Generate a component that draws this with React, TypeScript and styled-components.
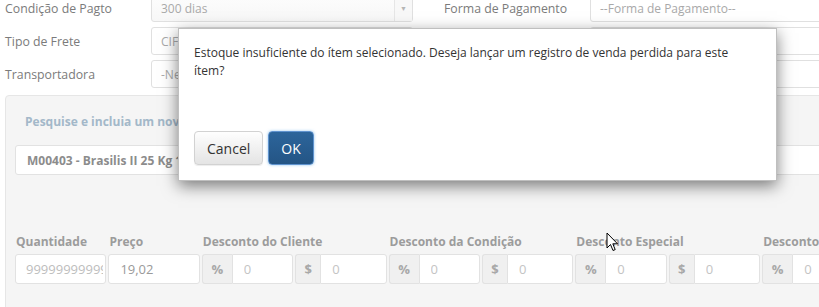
import React from "react";
import styled, { createGlobalStyle } from "styled-components";

const GlobalStyle = createGlobalStyle`
  html, body {
    margin: 0;
    background: #fff;
    font-family: "Open Sans", "Liberation Sans", sans-serif;
    overflow: hidden;
  }
`;

const Screen = styled.div`
  position: relative;
  display: flex;
  flex-direction: column;
  height: 100vh;
  overflow: hidden;
`;

const Page = styled.div`
  width: 880px;
  margin-top: -6px;
  padding-left: 5px;
`;

const TopForm = styled.div`
  display: grid;
  grid-template-columns: 146px 262px 177px 1fr;
  grid-auto-rows: 28px;
  row-gap: 5px;
  align-items: center;
`;

const FormLabel = styled.div<{ $indent?: number }>`
  padding-left: ${(p) => p.$indent ?? 0}px;
  font-size: 12.3px;
  color: #7b7b7b;
`;

const Box = styled.div`
  box-sizing: border-box;
  height: 28px;
  display: flex;
  align-items: center;
  padding-left: 9px;
  border: 1px solid #e0e0e0;
  border-radius: 3px;
  background: #fff;
  font-size: 12px;
  color: #a9a9a9;
`;

const SelectBox = styled(Box)`
  padding-right: 0;
  background: linear-gradient(#fdfdfd, #f7f7f7);
`;

const SelectText = styled.span`
  flex: 1;
`;

const SelectArrow = styled.span`
  display: flex;
  align-items: center;
  justify-content: center;
  width: 17px;
  height: 100%;
  border-left: 1px solid #e6e6e6;
  background: #f8f8f8;
  color: #b5b5b5;
  font-size: 7px;
`;

const Panel = styled.div`
  margin-top: 7px;
  height: 260px;
  padding: 17px 9px 0;
  border: 1px solid #e6e6e6;
  border-radius: 4px;
  background: #f5f5f5;
`;

const PanelTitle = styled.div`
  padding-left: 10px;
  font-size: 12px;
  line-height: 18px;
  font-weight: 700;
  color: #a3b8c9;
`;

const ProductBox = styled.div`
  box-sizing: border-box;
  height: 30px;
  margin-top: 14px;
  display: flex;
  align-items: center;
  padding-left: 11px;
  border: 1px solid #e2e2e2;
  border-radius: 3px;
  background: #fff;
  font-size: 12px;
  font-weight: 700;
  color: #8c8c8c;
`;

const Fields = styled.div`
  margin-top: 58px;
  display: grid;
  grid-template-columns: repeat(10, 91.4px);
  grid-template-rows: 17px 30px;
  column-gap: 2px;
  row-gap: 4px;
`;

const FieldLabel = styled.div<{ $span?: number }>`
  grid-column: span ${(p) => p.$span ?? 1};
  padding-left: 1px;
  font-size: 12px;
  line-height: 17px;
  font-weight: 700;
  color: #9c9c9c;
  white-space: nowrap;
`;

const Input = styled.input<{ $dark?: boolean; $pad?: number }>`
  box-sizing: border-box;
  width: 100%;
  min-width: 0;
  height: 30px;
  margin: 0;
  padding: 0 2px 0 ${(p) => p.$pad ?? 11}px;
  border: 1px solid #e2e2e2;
  border-radius: 3px;
  background: #fff;
  font-family: inherit;
  font-size: 13px;
  color: ${(p) => (p.$dark ? "#9a9a9a" : "#bdbdbd")};
  outline: none;

  &::placeholder {
    color: #c4c4c4;
    opacity: 1;
  }
`;

const Group = styled.div`
  display: flex;
  min-width: 0;
  height: 30px;
`;

const Addon = styled.span<{ $w: number }>`
  box-sizing: border-box;
  flex: 0 0 ${(p) => p.$w}px;
  display: flex;
  align-items: center;
  justify-content: center;
  border: 1px solid #e2e2e2;
  border-right: 0;
  border-radius: 3px 0 0 3px;
  background: #f0f0f0;
  font-size: 13px;
  font-weight: 700;
  color: #a8a8a8;
`;

const GroupInput = styled(Input)`
  flex: 1;
  border-radius: 0 3px 3px 0;
`;

const Modal = styled.div`
  position: absolute;
  left: 178px;
  top: 28px;
  box-sizing: border-box;
  width: 599px;
  height: 153px;
  padding: 15px;
  border: 1px solid rgba(0, 0, 0, 0.25);
  background: #fff;
  box-shadow: 0 5px 15px rgba(0, 0, 0, 0.5);
`;

const Message = styled.p`
  margin: 0 0 51px;
  font-size: 12px;
  line-height: 18px;
  color: #333;
`;

const Footer = styled.div`
  display: flex;
  gap: 5px;
`;

const Button = styled.button<{ $primary?: boolean }>`
  box-sizing: border-box;
  height: 34px;
  padding: 0 12px;
  border-radius: 4px;
  font-family: inherit;
  font-size: 14px;
  cursor: pointer;
  border: 1px solid ${(p) => (p.$primary ? "#5f93cf" : "#d2d2d2")};
  color: ${(p) => (p.$primary ? "#fff" : "#333")};
  background: ${(p) =>
    p.$primary
      ? "linear-gradient(#2c659b, #245585)"
      : "linear-gradient(#fefefe, #e4e4e4)"};
  box-shadow: ${(p) =>
    p.$primary
      ? "0 0 3px rgba(102, 175, 233, 0.7)"
      : "inset 0 1px 0 rgba(255,255,255,.15), 0 1px 1px rgba(0,0,0,.075)"};
`;

const Cursor = styled.svg`
  position: absolute;
  left: 606px;
  top: 232px;
`;

function DiscountGroup() {
  return (
    <>
      <Group>
        <Addon $w={30}>%</Addon>
        <GroupInput readOnly placeholder="0" />
      </Group>
      <Group>
        <Addon $w={25}>$</Addon>
        <GroupInput readOnly placeholder="0" />
      </Group>
    </>
  );
}

export default function App() {
  return (
    <Screen>
      <GlobalStyle />
      <Page>
        <TopForm>
          <FormLabel>Condição de Pagto</FormLabel>
          <SelectBox>
            <SelectText>300 dias</SelectText>
            <SelectArrow>▼</SelectArrow>
          </SelectBox>
          <FormLabel $indent={31}>Forma de Pagamento</FormLabel>
          <Box>--Forma de Pagamento--</Box>

          <FormLabel>Tipo de Frete</FormLabel>
          <Box>CIF</Box>
          <div />
          <Box />

          <FormLabel>Transportadora</FormLabel>
          <Box>-Nenhuma-</Box>
          <div />
          <Box />
        </TopForm>

        <Panel>
          <PanelTitle>Pesquise e incluia um novo ítem</PanelTitle>
          <ProductBox>M00403 - Brasilis II 25 Kg 1x25</ProductBox>

          <Fields>
            <FieldLabel>Quantidade</FieldLabel>
            <FieldLabel>Preço</FieldLabel>
            <FieldLabel $span={2}>Desconto do Cliente</FieldLabel>
            <FieldLabel $span={2}>Desconto da Condição</FieldLabel>
            <FieldLabel $span={2}>Desconto Especial</FieldLabel>
            <FieldLabel $span={2}>Desconto Adicional</FieldLabel>

            <Input readOnly defaultValue="99999999999" $pad={10} />
            <Input readOnly defaultValue="19,02" $dark />
            <DiscountGroup />
            <DiscountGroup />
            <DiscountGroup />
            <DiscountGroup />
          </Fields>
        </Panel>
      </Page>

      <Modal>
        <Message>
          Estoque insuficiente do ítem selecionado. Deseja lançar um registro de
          venda perdida para este ítem?
        </Message>
        <Footer>
          <Button>Cancel</Button>
          <Button $primary>OK</Button>
        </Footer>
      </Modal>

      <Cursor width="13" height="21" viewBox="0 0 13 21">
        <path
          d="M1 1 L1 16 L4.5 12.5 L7 18.5 L9.2 17.6 L6.8 11.8 L11.5 11.8 Z"
          fill="#fff"
          stroke="#000"
          strokeWidth="1"
          strokeLinejoin="round"
        />
      </Cursor>
    </Screen>
  );
}
